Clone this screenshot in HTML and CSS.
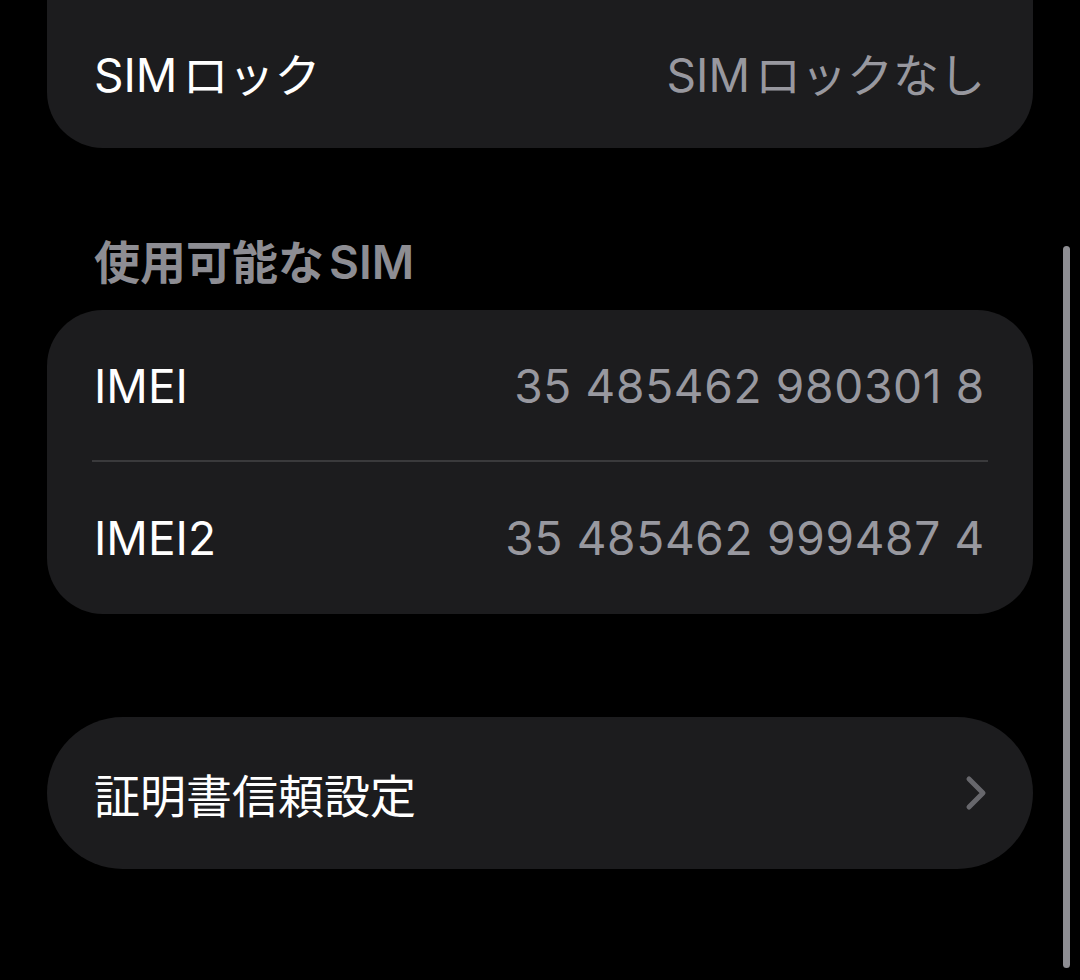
FILE: index.html
```html
<!DOCTYPE html>
<html lang="ja">
<head>
    <meta charset="UTF-8">
    <meta name="viewport" content="width=device-width, initial-scale=1.0">
    <title>情報</title>
    <link rel="stylesheet" href="styles.css">
</head>
<body>

    <!-- 🔹 SIMロック -->
    <div class="card card-top">
        <div class="row">
            <span class="label">SIM<span class="gap">ロック</span></span>
            <span class="value">SIM<span class="gap">ロックなし</span></span>
        </div>
    </div>

    <!-- 🔹 使用可能なSIM -->
    <h2 class="section-title">使用可能な<span class="gap">SIM</span></h2>
    <div class="card">
        <div class="row">
            <span class="label">IMEI</span>
            <span class="value number">35 485462 980301 8</span>
        </div>
        <div class="divider"></div>
        <div class="row">
            <span class="label">IMEI2</span>
            <span class="value number">35 485462 999487 4</span>
        </div>
    </div>

    <!-- 🔹 証明書信頼設定 -->
    <div class="card card-link">
        <div class="row">
            <span class="label">証明書信頼設定</span>
            <svg class="chevron" width="22" height="36" viewBox="0 0 22 36">
                <polyline points="4,4 18,18 4,32" fill="none" stroke="#67676c" stroke-width="5" stroke-linecap="round" stroke-linejoin="round"/>
            </svg>
        </div>
    </div>

    <div class="scrollbar"></div>

</body>
</html>
```

FILE: styles.css
```css
body {
    margin: 0;
    padding: 0 47px;
    background-color: #000;
    font-family: Inter, "Noto Sans CJK JP", sans-serif;
    color: #fff;
    overflow: hidden;
}
.card {
    background-color: #1c1c1e;
    border-radius: 56px;
}
.card-top {
    margin-top: -80px;
    padding-top: 76px;
}
.card-link {
    margin-top: 103px;
    border-radius: 76px;
}
.row {
    height: 152px;
    display: flex;
    align-items: center;
    justify-content: space-between;
    padding: 0 48px 0 47px;
    font-size: 46px;
}
.label {
    color: #fff;
}
.value {
    color: #98989f;
}
.number {
    letter-spacing: 0.7px;
}
.gap {
    margin-left: 5px;
}
.divider {
    height: 2px;
    margin: -2px 45px 0;
    background-color: #3a3a3c;
}
.section-title {
    margin: 86px 0 20px 47px;
    height: 56px;
    line-height: 56px;
    font-size: 46px;
    font-weight: 600;
    color: #8d8d93;
}
.chevron {
    margin-right: -2px;
}
.scrollbar {
    position: fixed;
    top: 246px;
    left: 1063px;
    width: 7px;
    height: 722px;
    border-radius: 4px;
    background-color: #8e8e93;
}
```
